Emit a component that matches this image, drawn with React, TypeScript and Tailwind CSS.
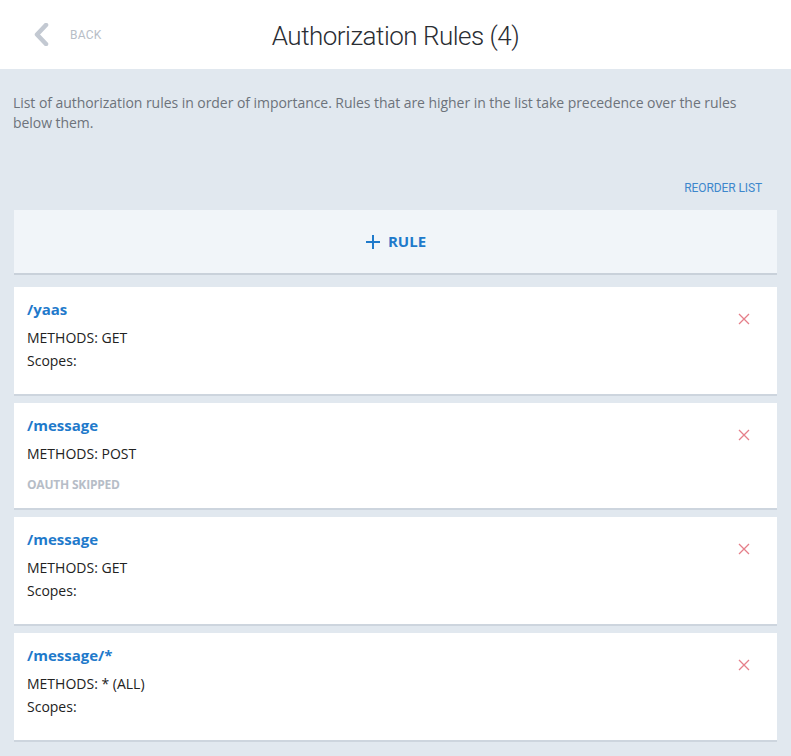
const rules = [
  { path: "/yaas", methods: "GET", oauthSkipped: false },
  { path: "/message", methods: "POST", oauthSkipped: true },
  { path: "/message", methods: "GET", oauthSkipped: false },
  { path: "/message/*", methods: "* (ALL)", oauthSkipped: false },
];

const CloseIcon = () => (
  <svg width="12" height="12" viewBox="0 0 12 12" className="shrink-0">
    <path d="M1 1 L11 11 M11 1 L1 11" stroke="#e57f8a" strokeWidth="1.3" fill="none" />
  </svg>
);

const RuleCard = ({ rule }: { rule: (typeof rules)[number] }) => (
  <div className="flex justify-between bg-white pl-[13px] pr-[27px] pt-[11px] pb-[22px] shadow-[0_2px_0_#cdd5de]">
    <div className="flex flex-col">
      <div className="text-[15px] leading-[22px] font-bold text-[#1f7acb] mb-[6px]">{rule.path}</div>
      <div className="text-[14px] leading-[23px] text-[#222]">METHODS: {rule.methods}</div>
      {rule.oauthSkipped ? (
        <div className="mt-[9px] text-[12px] leading-[22px] font-bold text-[#b6bdc7] -mb-[10px] tracking-[-0.2px]">OAUTH SKIPPED</div>
      ) : (
        <div className="text-[14px] leading-[23px] text-[#222]">Scopes:</div>
      )}
    </div>
    <div className="pt-[15px]">
      <CloseIcon />
    </div>
  </div>
);

export default function App() {
  return (
    <div className="min-h-[756px] bg-[#e1e8ef] font-['Open_Sans',sans-serif]">
      <header className="relative flex h-[69px] items-center bg-white">
        <div className="flex items-center pl-[33px]">
          <svg width="16" height="23" viewBox="0 0 16 23">
            <path d="M13 2 L4 11.5 L13 21" stroke="#c3c9d2" strokeWidth="4.5" fill="none" strokeLinejoin="round" strokeLinecap="round" />
          </svg>
          <span className="ml-[21px] text-[12px] text-[#b8bec7] font-['Roboto',sans-serif] tracking-[0.2px]">BACK</span>
        </div>
        <h1 className="absolute left-1/2 -translate-x-1/2 top-[19px] whitespace-nowrap font-['Roboto',sans-serif] font-light text-[26px] leading-[34px] text-[#2a2d33] tracking-[-0.5px]">
          Authorization Rules (4)
        </h1>
      </header>

      <p className="px-[13px] pt-[24px] text-[14px] leading-[20px] text-[#6d737b] tracking-[-0.05px]">
        List of authorization rules in order of importance. Rules that are higher in the list take precedence over the rules below them.
      </p>

      <div className="flex justify-end pr-[29px] pt-[46px] pb-[13px]">
        <span className="font-['Roboto',sans-serif] text-[12px] leading-[18px] text-[#3d87cc] tracking-[-0.1px]">REORDER LIST</span>
      </div>

      <div className="mx-[14px] flex flex-col gap-[9px] pb-[15px]">
        <div className="mb-[5px] flex h-[63px] items-center justify-center gap-[7px] bg-[#f1f5f9] shadow-[0_2px_0_#c9d1da]">
          <svg width="16" height="16" viewBox="0 0 16 16">
            <path d="M8 1 V15 M1 8 H15" stroke="#1f7acb" strokeWidth="2" fill="none" />
          </svg>
          <span className="text-[15px] font-bold text-[#1f7acb]">RULE</span>
        </div>
        {rules.map((rule, i) => (
          <RuleCard key={i} rule={rule} />
        ))}
      </div>
    </div>
  );
}
